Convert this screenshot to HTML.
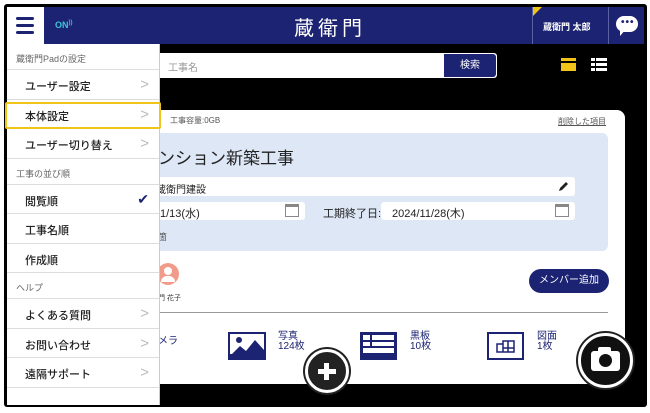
<!DOCTYPE html>
<html><head><meta charset="utf-8"><style>
*{box-sizing:border-box;margin:0;padding:0}
body{width:650px;height:413px;background:#fff;position:relative;overflow:hidden;font-family:"Liberation Sans","Noto Sans CJK JP",sans-serif;color:#222}
.abs{position:absolute}
#frame{left:4px;top:4px;width:643px;height:403px;background:#000;border-radius:3px}
#hdr{left:7px;top:7px;width:637px;height:37px;background:#1c2372}
#menu{left:7px;top:44px;width:153px;height:361px;background:#fff;border-right:1px solid #ccc}
.sec{height:26px;font-size:9px;color:#666;padding:8px 0 0 9px;border-bottom:1px solid #ddd;background:#fff}
.it{height:29.5px;font-size:11px;color:#222;padding:8px 0 0 18px;border-bottom:1px solid #ddd;position:relative;font-weight:500}
.it .ar{position:absolute;right:10px;top:6px;color:#bbb;font-size:15px;font-weight:normal}
</style></head><body>
<div id="frame" class="abs"></div>
<div id="hdr" class="abs">
  <div class="abs" style="left:0;top:0;width:37px;height:37px;background:#fff"></div>
  <div class="abs" style="left:9px;top:10px;width:18px;height:3px;background:#1c2372;border-radius:2px"></div>
  <div class="abs" style="left:9px;top:17px;width:18px;height:3px;background:#1c2372;border-radius:2px"></div>
  <div class="abs" style="left:9px;top:24px;width:18px;height:3px;background:#1c2372;border-radius:2px"></div>
  <div class="abs" style="left:48px;top:13px;font-size:9px;color:#3ec6d8;font-weight:bold">ON<sup style="font-size:6px">))</sup></div>
  <div class="abs" style="left:287px;top:5px;font-size:20px;color:#fff;letter-spacing:4px">蔵衛門</div>
  <div class="abs" style="left:525px;top:0;width:1px;height:37px;background:#5a60a0"></div>
  <div class="abs" style="left:526px;top:0;width:0;height:0;border-top:9px solid #f0c419;border-right:9px solid transparent"></div>
  <div class="abs" style="left:536px;top:13px;font-size:9px;color:#fff;font-weight:bold">蔵衛門 太郎</div>
  <div class="abs" style="left:601px;top:0;width:1px;height:37px;background:#5a60a0"></div>
  <div class="abs" style="left:609px;top:9px;width:22px;height:16px;background:#fff;border-radius:8px"></div>
  <div class="abs" style="left:613px;top:22px;width:0;height:0;border-top:7px solid #fff;border-right:6px solid transparent"></div>
  <div class="abs" style="left:614px;top:10px;font-size:10px;color:#1c2372;font-weight:bold;letter-spacing:1px">•••</div>
</div>
<!-- search -->
<div class="abs" style="left:150px;top:53px;width:347px;height:25px;background:#fff;border-radius:3px"></div>
<div class="abs" style="left:168px;top:59px;font-size:10px;color:#999">工事名</div>
<div class="abs" style="left:444px;top:54px;width:52px;height:23px;background:#1c2372;border-radius:0 3px 3px 0;color:#fff;font-size:10px;text-align:center;line-height:23px">検索</div>
<div class="abs" style="left:561px;top:58px;width:15px;height:13px;background:#f0c419"></div>
<div class="abs" style="left:561px;top:61px;width:15px;height:2px;background:#000"></div>
<div class="abs" style="left:591px;top:58px;width:16px;height:13px;background:repeating-linear-gradient(#fff 0 3px,#000 3px 5px)"></div>
<div class="abs" style="left:595px;top:58px;width:1px;height:13px;background:#000"></div>
<!-- card -->
<div class="abs" style="left:150px;top:110px;width:475px;height:274px;background:#fff;border-radius:8px"></div>
<div class="abs" style="left:170px;top:115px;font-size:8px;color:#555">工事容量:0GB</div>
<div class="abs" style="left:558px;top:116px;font-size:8px;color:#555;text-decoration:underline">削除した項目</div>
<div class="abs" style="left:150px;top:133px;width:458px;height:118px;background:#dde7f6;border-radius:0 6px 6px 0"></div>
<div class="abs" style="left:158px;top:144px;font-size:17px;color:#222">ンション新築工事</div>
<div class="abs" style="left:150px;top:177px;width:425px;height:19px;background:#fff;border-radius:3px"></div>
<div class="abs" style="left:156px;top:181px;font-size:10px">蔵衛門建設</div>
<svg class="abs" style="left:557px;top:180px" width="13" height="13" viewBox="0 0 13 13"><path d="M2 11l1-3 6-6 2 2-6 6z" fill="#222"/></svg>
<div class="abs" style="left:150px;top:202px;width:155px;height:18px;background:#fff;border-radius:3px"></div>
<div class="abs" style="left:160px;top:205px;font-size:11px">1/13(水)</div>
<div class="abs" style="left:285px;top:204px;width:14px;height:13px;border:1.5px solid #888;border-top-width:3px;background:#fff"></div>
<div class="abs" style="left:323px;top:205px;font-size:11px">工期終了日:</div>
<div class="abs" style="left:381px;top:202px;width:194px;height:18px;background:#fff;border-radius:3px"></div>
<div class="abs" style="left:392px;top:205px;font-size:11px">2024/11/28(木)</div>
<div class="abs" style="left:555px;top:204px;width:14px;height:13px;border:1.5px solid #888;border-top-width:3px;background:#fff"></div>
<div class="abs" style="left:158px;top:230px;font-size:9px;color:#555">箇</div>
<div class="abs" style="left:157px;top:263px;width:22px;height:22px;border-radius:50%;background:#f19c8a"></div>
<div class="abs" style="left:164px;top:267px;width:8px;height:8px;border-radius:50%;background:#fff"></div>
<div class="abs" style="left:161px;top:276px;width:14px;height:6px;border-radius:7px 7px 0 0;background:#fff"></div>
<div class="abs" style="left:158px;top:293px;font-size:7px;color:#333">門 花子</div>
<div class="abs" style="left:529px;top:269px;width:80px;height:24px;background:#1c2372;border-radius:12px;color:#fff;font-size:10px;text-align:center;line-height:24px">メンバー追加</div>
<div class="abs" style="left:150px;top:312px;width:458px;height:1px;background:#999"></div>
<div class="abs" style="left:158px;top:332px;font-size:10px;color:#1c2372">メラ</div>
<svg class="abs" style="left:228px;top:332px" width="38" height="28" viewBox="0 0 38 28"><rect width="38" height="28" fill="#1c2372"/><rect x="2" y="2" width="34" height="20" fill="#fff"/><path d="M2 24L12 14l6 5 9-11 9 10v8H2z" fill="#1c2372"/><circle cx="11" cy="8" r="3" fill="#1c2372"/></svg>
<div class="abs" style="left:278px;top:332px;font-size:10px;color:#1c2372;line-height:10px">写真<br>124枚</div>
<svg class="abs" style="left:360px;top:332px" width="37" height="28" viewBox="0 0 37 28"><rect width="37" height="28" fill="#1c2372"/><rect x="3" y="3" width="31" height="18" fill="#fff"/><rect x="3" y="8" width="31" height="2" fill="#1c2372"/><rect x="3" y="14" width="31" height="2" fill="#1c2372"/><rect x="10" y="3" width="2" height="13" fill="#1c2372"/></svg>
<div class="abs" style="left:410px;top:332px;font-size:10px;color:#1c2372;line-height:10px">黒板<br>10枚</div>
<svg class="abs" style="left:487px;top:332px" width="37" height="28" viewBox="0 0 37 28"><rect x="1" y="1" width="35" height="26" fill="#fff" stroke="#1c2372" stroke-width="2"/><path d="M10 20v-8h6v-3h11v11zM16 12v8M21 9v11M16 16h11" fill="none" stroke="#1c2372" stroke-width="1.5"/></svg>
<div class="abs" style="left:537px;top:332px;font-size:10px;color:#1c2372;line-height:10px">図面<br>1枚</div>
<div class="abs" style="left:305px;top:349px;width:44px;height:44px;border-radius:50%;background:#222;border:3px solid #fff;box-shadow:0 0 0 2px #222"></div>
<div class="abs" style="left:318px;top:369px;width:18px;height:5px;background:#fff"></div>
<div class="abs" style="left:324px;top:363px;width:5px;height:17px;background:#fff"></div>
<div class="abs" style="left:578px;top:333px;width:55px;height:55px;border-radius:50%;background:#111;border:3px solid #fff;box-shadow:0 0 0 2px #222"></div>
<div class="abs" style="left:591px;top:351px;width:29px;height:20px;background:#fff;border-radius:3px"></div>
<div class="abs" style="left:598px;top:347px;width:13px;height:6px;background:#fff;border-radius:2px"></div>
<div class="abs" style="left:599px;top:354px;width:13px;height:13px;border-radius:50%;background:#111"></div>
<!-- menu -->
<div id="menu" class="abs">
  <div class="sec">蔵衛門Padの設定</div>
  <div class="it">ユーザー設定<span class="ar">&gt;</span></div>
  <div class="it">本体設定<span class="ar">&gt;</span></div>
  <div class="it">ユーザー切り替え<span class="ar">&gt;</span></div>
  <div class="sec">工事の並び順</div>
  <div class="it">閲覧順<span class="ar" style="color:#1c2372;font-size:14px;top:6px">✔</span></div>
  <div class="it">工事名順</div>
  <div class="it">作成順</div>
  <div class="sec">ヘルプ</div>
  <div class="it">よくある質問<span class="ar">&gt;</span></div>
  <div class="it">お問い合わせ<span class="ar">&gt;</span></div>
  <div class="it">遠隔サポート<span class="ar">&gt;</span></div>
</div>
<div class="abs" style="left:5px;top:102px;width:156px;height:27px;border:2px solid #f0c419;border-radius:2px"></div>
</body></html>
